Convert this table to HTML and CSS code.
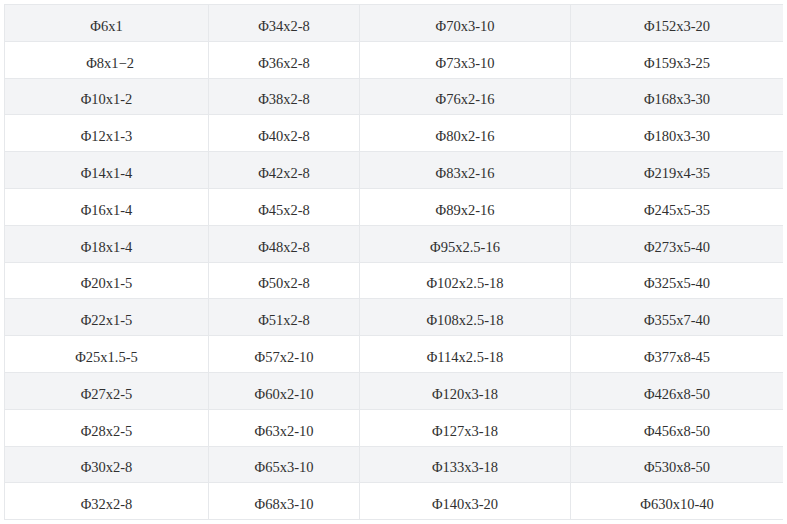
FILE: index.html
```html
<!DOCTYPE html>
<html>
<head>
<meta charset="utf-8">
<link rel="stylesheet" href="styles.css">
</head>
<body>
<table class="spec">
<colgroup><col class="c1"><col class="c2"><col class="c3"><col class="c4"></colgroup>
<tbody>
<tr><td>Φ6x1</td><td>Φ34x2-8</td><td>Φ70x3-10</td><td>Φ152x3-20</td></tr>
<tr><td>&nbsp;&nbsp;Φ8x1−2</td><td>Φ36x2-8</td><td>Φ73x3-10</td><td>Φ159x3-25</td></tr>
<tr><td>Φ10x1-2</td><td>Φ38x2-8</td><td>Φ76x2-16</td><td>Φ168x3-30</td></tr>
<tr><td>Φ12x1-3</td><td>Φ40x2-8</td><td>Φ80x2-16</td><td>Φ180x3-30</td></tr>
<tr><td>Φ14x1-4</td><td>Φ42x2-8</td><td>Φ83x2-16</td><td>Φ219x4-35</td></tr>
<tr><td>Φ16x1-4</td><td>Φ45x2-8</td><td>Φ89x2-16</td><td>Φ245x5-35</td></tr>
<tr><td>Φ18x1-4</td><td>Φ48x2-8</td><td>Φ95x2.5-16</td><td>Φ273x5-40</td></tr>
<tr><td>Φ20x1-5</td><td>Φ50x2-8</td><td>Φ102x2.5-18</td><td>Φ325x5-40</td></tr>
<tr><td>Φ22x1-5</td><td>Φ51x2-8</td><td>Φ108x2.5-18</td><td>Φ355x7-40</td></tr>
<tr><td>Φ25x1.5-5</td><td>Φ57x2-10</td><td>Φ114x2.5-18</td><td>Φ377x8-45</td></tr>
<tr><td>Φ27x2-5</td><td>Φ60x2-10</td><td>Φ120x3-18</td><td>Φ426x8-50</td></tr>
<tr><td>Φ28x2-5</td><td>Φ63x2-10</td><td>Φ127x3-18</td><td>Φ456x8-50</td></tr>
<tr><td>Φ30x2-8</td><td>Φ65x3-10</td><td>Φ133x3-18</td><td>Φ530x8-50</td></tr>
<tr><td>Φ32x2-8</td><td>Φ68x3-10</td><td>Φ140x3-20</td><td>Φ630x10-40</td></tr>
</tbody>
</table>
</body>
</html>
```
FILE: styles.css
```css
html, body {
  background: #ffffff;
}
body {
  margin: 4px;
  font-family: "Liberation Serif", "Times New Roman", serif;
  font-size: 14.5px;
  color: #303030;
}
.spec {
  border-collapse: collapse;
  table-layout: fixed;
  width: 779px;
  border: 1px solid #e6e8eb;
}
.c1 { width: 204px; }
.c2 { width: 151px; }
.c3 { width: 211px; }
.c4 { width: 213px; }
.spec tr {
  height: 36.8px;
}
.spec tr:nth-child(odd) {
  background: #f3f4f6;
}
.spec td {
  border: 1px solid #e6e8eb;
  padding: 6px 4px 0;
  text-align: center;
  vertical-align: middle;
  line-height: 20px;
  white-space: nowrap;
}
```
